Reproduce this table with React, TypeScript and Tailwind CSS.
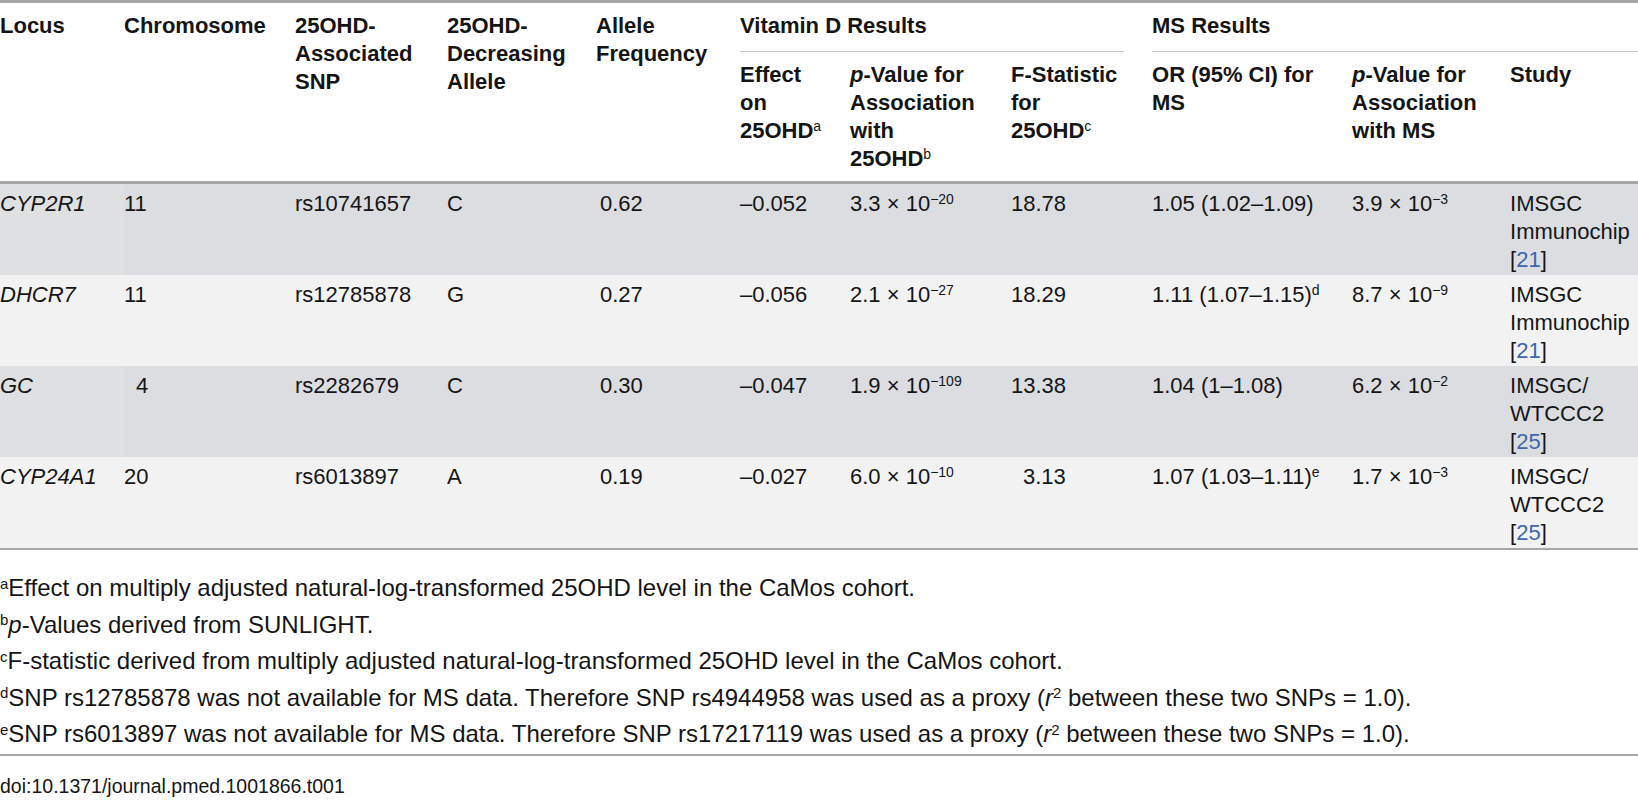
import type { ReactNode } from 'react';

// Table 1 — genetic determinants of 25OHD and their association with MS.

type Row = {
  locus: string;
  chr: string;
  chrPad?: boolean;
  snp: string;
  allele: string;
  freq: string;
  effect: string;
  p: [string, string];
  f: string;
  fPad?: boolean;
  or: string;
  orNote?: string;
  pms: [string, string];
  study: string[];
  ref: string;
};

const rows: Row[] = [
  {
    locus: 'CYP2R1',
    chr: '11',
    snp: 'rs10741657',
    allele: 'C',
    freq: '0.62',
    effect: '–0.052',
    p: ['3.3', '−20'],
    f: '18.78',
    or: '1.05 (1.02–1.09)',
    pms: ['3.9', '−3'],
    study: ['IMSGC', 'Immunochip'],
    ref: '21',
  },
  {
    locus: 'DHCR7',
    chr: '11',
    snp: 'rs12785878',
    allele: 'G',
    freq: '0.27',
    effect: '–0.056',
    p: ['2.1', '−27'],
    f: '18.29',
    or: '1.11 (1.07–1.15)',
    orNote: 'd',
    pms: ['8.7', '−9'],
    study: ['IMSGC', 'Immunochip'],
    ref: '21',
  },
  {
    locus: 'GC',
    chr: '4',
    chrPad: true,
    snp: 'rs2282679',
    allele: 'C',
    freq: '0.30',
    effect: '–0.047',
    p: ['1.9', '−109'],
    f: '13.38',
    or: '1.04 (1–1.08)',
    pms: ['6.2', '−2'],
    study: ['IMSGC/', 'WTCCC2'],
    ref: '25',
  },
  {
    locus: 'CYP24A1',
    chr: '20',
    snp: 'rs6013897',
    allele: 'A',
    freq: '0.19',
    effect: '–0.027',
    p: ['6.0', '−10'],
    f: '3.13',
    fPad: true,
    or: '1.07 (1.03–1.11)',
    orNote: 'e',
    pms: ['1.7', '−3'],
    study: ['IMSGC/', 'WTCCC2'],
    ref: '25',
  },
];

function Sup({ children, className = 'text-[14px]' }: { children: ReactNode; className?: string }) {
  return <sup className={`${className} font-normal`}>{children}</sup>;
}

function Sci({ v }: { v: [string, string] }) {
  return (
    <>
      {v[0]} × 10<Sup>{v[1]}</Sup>
    </>
  );
}

const th = 'p-0 pt-[9px] text-left align-top font-bold';
const headBottom = 'border-b-[3px] border-[#a7a7a7]';
const td = 'p-0 pt-[6px] pb-[1px] align-top font-normal text-left';

export default function App() {
  return (
    <div className="w-[1638px] bg-white font-['Liberation_Sans',Arial,sans-serif] text-[22px] leading-[28px] text-[#151515]">
      <table className="w-[1638px] table-fixed border-separate border-spacing-0 border-t-[3px] border-b-[2px] border-[#a7a7a7]">
        <colgroup>
          <col className="w-[124px]" />
          <col className="w-[171px]" />
          <col className="w-[152px]" />
          <col className="w-[149px]" />
          <col className="w-[144px]" />
          <col className="w-[110px]" />
          <col className="w-[161px]" />
          <col className="w-[141px]" />
          <col className="w-[200px]" />
          <col className="w-[158px]" />
          <col className="w-[128px]" />
        </colgroup>
        <thead>
          <tr>
            <th rowSpan={2} className={`${th} ${headBottom}`}>Locus</th>
            <th rowSpan={2} className={`${th} ${headBottom}`}>Chromosome</th>
            <th rowSpan={2} className={`${th} ${headBottom}`}>
              25OHD-
              <br />
              Associated
              <br />
              SNP
            </th>
            <th rowSpan={2} className={`${th} ${headBottom}`}>
              25OHD-
              <br />
              Decreasing
              <br />
              Allele
            </th>
            <th rowSpan={2} className={`${th} ${headBottom}`}>
              Allele
              <br />
              Frequency
            </th>
            <th colSpan={3} className={th}>
              <div className="mr-[28px] border-b border-[#c9c9c9] pb-[11px]">Vitamin D Results</div>
            </th>
            <th colSpan={3} className={th}>
              <div className="border-b border-[#c9c9c9] pb-[11px]">MS Results</div>
            </th>
          </tr>
          <tr>
            <th className={`${th} ${headBottom} pb-[8px]`}>
              Effect
              <br />
              on
              <br />
              25OHD<Sup>a</Sup>
            </th>
            <th className={`${th} ${headBottom} pb-[8px]`}>
              <i>p</i>-Value for
              <br />
              Association
              <br />
              with
              <br />
              25OHD<Sup>b</Sup>
            </th>
            <th className={`${th} ${headBottom} pb-[8px]`}>
              F-Statistic
              <br />
              for
              <br />
              25OHD<Sup>c</Sup>
            </th>
            <th className={`${th} ${headBottom} pb-[8px]`}>
              OR (95% CI) for
              <br />
              MS
            </th>
            <th className={`${th} ${headBottom} pb-[8px]`}>
              <i>p</i>-Value for
              <br />
              Association
              <br />
              with MS
            </th>
            <th className={`${th} ${headBottom} pb-[8px]`}>Study</th>
          </tr>
        </thead>
        <tbody>
          {rows.map((r, i) => (
            <tr key={r.locus} className={i % 2 === 0 ? 'bg-[#dcdde0]' : 'bg-[#f2f2f3]'}>
              <td className={`${td} italic ${i % 2 === 0 ? 'bg-[#dfe0e2]' : ''}`}>{r.locus}</td>
              <td className={td}>
                <span className={r.chrPad ? 'pl-[12px]' : ''}>{r.chr}</span>
              </td>
              <td className={td}>{r.snp}</td>
              <td className={td}>{r.allele}</td>
              <td className={td}>
                <span className="pl-[4px]">{r.freq}</span>
              </td>
              <td className={td}>{r.effect}</td>
              <td className={td}>
                <Sci v={r.p} />
              </td>
              <td className={td}>
                <span className={r.fPad ? 'pl-[12px]' : ''}>{r.f}</span>
              </td>
              <td className={td}>
                {r.or}
                {r.orNote && <Sup>{r.orNote}</Sup>}
              </td>
              <td className={td}>
                <Sci v={r.pms} />
              </td>
              <td className={td}>
                {r.study.map((s) => (
                  <div key={s}>{s}</div>
                ))}
                <div>
                  [<a className="text-[#3b66b0]">{r.ref}</a>]
                </div>
              </td>
            </tr>
          ))}
        </tbody>
      </table>

      {/* footnotes are set a touch larger than the table body */}
      <div className="mt-[20px] text-[24px] leading-[36.5px]">
        <p>
          <Sup className="text-[15px]">a</Sup>Effect on multiply adjusted natural-log-transformed 25OHD level in the CaMos cohort.
        </p>
        <p>
          <Sup className="text-[15px]">b</Sup>
          <i>p</i>-Values derived from SUNLIGHT.
        </p>
        <p>
          <Sup className="text-[15px]">c</Sup>F-statistic derived from multiply adjusted natural-log-transformed 25OHD level in the CaMos cohort.
        </p>
        <p>
          <Sup className="text-[15px]">d</Sup>SNP rs12785878 was not available for MS data. Therefore SNP rs4944958 was used as a proxy (
          <i>r</i>
          <Sup className="text-[15px]">2</Sup> between these two SNPs = 1.0).
        </p>
        <p>
          <Sup className="text-[15px]">e</Sup>SNP rs6013897 was not available for MS data. Therefore SNP rs17217119 was used as a proxy (
          <i>r</i>
          <Sup className="text-[15px]">2</Sup> between these two SNPs = 1.0).
        </p>
      </div>

      <div className="mt-[1px] border-t-2 border-[#a7a7a7] pt-[16px]">
        <p className="text-[19.5px]">doi:10.1371/journal.pmed.1001866.t001</p>
      </div>
    </div>
  );
}
